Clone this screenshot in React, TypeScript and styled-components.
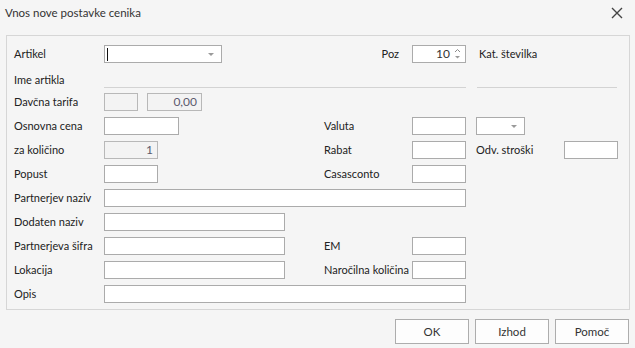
import React from "react";
import styled, { createGlobalStyle } from "styled-components";

const GlobalStyle = createGlobalStyle`
  html, body {
    margin: 0;
    padding: 0;
    background: #f5f5f5;
  }
  body {
    font-family: Lato, "Noto Sans", Arial, sans-serif;
    font-size: 11px;
    color: #222;
  }
`;

const Window = styled.div`
  width: 635px;
  height: 348px;
  background: #f5f5f5;
  display: flex;
  flex-direction: column;
  overflow: hidden;
`;

const TitleBar = styled.div`
  height: 35px;
  display: flex;
  align-items: flex-start;
  justify-content: space-between;
  padding: 4px 12px 0 5px;
  box-sizing: border-box;
`;

const Title = styled.div`
  font-size: 11.5px;
  line-height: 18px;
  color: #333;
`;

const CloseButton = styled.div`
  width: 12px;
  height: 12px;
  margin-top: 3px;
  display: flex;
`;

const Panel = styled.div`
  margin: 0 5px 0 6px;
  height: 275px;
  border: 1px solid #d6d6d6;
  box-sizing: border-box;
  overflow: hidden;
`;

const FormGrid = styled.div`
  display: grid;
  grid-template-columns: 90px 220px 88px 54px 10px 88px 54px;
  grid-auto-rows: 18px;
  row-gap: 6px;
  padding: 9px 0 0 7px;
`;

const Label = styled.div<{ $col?: string; $right?: boolean; $indent?: number; $drop?: number }>`
  grid-column: ${(p) => p.$col || "auto"};
  line-height: 18px;
  white-space: nowrap;
  text-align: ${(p) => (p.$right ? "right" : "left")};
  padding-right: ${(p) => (p.$right ? "13px" : "0")};
  padding-left: ${(p) => p.$indent || 0}px;
  margin-top: ${(p) => p.$drop || 0}px;
`;

const Field = styled.div<{ $col?: string; $w?: number; $disabled?: boolean }>`
  grid-column: ${(p) => p.$col || "auto"};
  width: ${(p) => (p.$w ? `${p.$w}px` : "auto")};
  height: 18px;
  box-sizing: border-box;
  border: 1px solid ${(p) => (p.$disabled ? "#b8b8b8" : "#ababab")};
  background: ${(p) => (p.$disabled ? "#f3f3f3" : "#ffffff")};
  display: flex;
  align-items: center;
  justify-content: flex-end;
  padding: 0 4px 0 2px;
  color: #5b5b6e;
  font-size: 12px;
  line-height: 16px;
  position: relative;
`;

const Pair = styled.div<{ $col?: string }>`
  grid-column: ${(p) => p.$col || "auto"};
  display: flex;
  gap: 9px;
`;

const Caret = styled.span`
  position: absolute;
  left: 2px;
  top: 2px;
  width: 1px;
  height: 13px;
  background: #111;
`;

const DropArrow = styled.span`
  position: absolute;
  right: 7px;
  top: 7px;
  width: 0;
  height: 0;
  border-left: 3px solid transparent;
  border-right: 3px solid transparent;
  border-top: 3px solid #9a9a9a;
`;

const SpinValue = styled.span`
  margin-right: 4px;
  color: #333;
`;

const Underline = styled.div<{ $col: string; $inset?: number }>`
  grid-column: ${(p) => p.$col};
  align-self: end;
  height: 0;
  border-bottom: 1px solid #d3d3d3;
  margin: 0 ${(p) => p.$inset || 0}px -1px ${(p) => p.$inset || 0}px;
`;

const Footer = styled.div`
  display: flex;
  justify-content: flex-end;
  gap: 6px;
  padding: 9px 6px 0 0;
`;

const Button = styled.div`
  width: 74px;
  height: 25px;
  box-sizing: border-box;
  border: 1px solid #adadad;
  background: #fdfdfd;
  display: flex;
  align-items: center;
  justify-content: center;
  color: #333;
  font-size: 11.5px;
`;

const SpinArrows = () => (
  <svg width="7" height="12" viewBox="0 0 7 12">
    <path d="M1 4 L3.5 1.5 L6 4" fill="none" stroke="#8a8a8a" strokeWidth="1" />
    <path d="M1 8 L6 8 L3.5 10.5 Z" fill="#9a9a9a" />
  </svg>
);

export default function App() {
  return (
    <Window>
      <GlobalStyle />
      <TitleBar>
        <Title>Vnos nove postavke cenika</Title>
        <CloseButton>
          <svg width="12" height="12" viewBox="0 0 12 12">
            <path d="M1 1 L11 11 M11 1 L1 11" stroke="#444" strokeWidth="1.4" />
          </svg>
        </CloseButton>
      </TitleBar>
      <Panel>
        <FormGrid>
          <Label $col="1">Artikel</Label>
          <Field $col="2" $w={118}>
            <Caret />
            <DropArrow />
          </Field>
          <Label $col="3" $right>
            Poz
          </Label>
          <Field $col="4">
            <SpinValue>10</SpinValue>
            <SpinArrows />
          </Field>
          <Label $col="6 / 8" $indent={3}>
            Kat. številka
          </Label>

          <Label $col="1" $drop={2}>
            Ime artikla
          </Label>
          <Underline $col="2 / 5" />
          <Underline $col="6 / 8" $inset={1} />

          <Label $col="1">Davčna tarifa</Label>
          <Pair $col="2">
            <Field $w={34} $disabled />
            <Field $w={55} $disabled>
              0,00
            </Field>
          </Pair>

          <Label $col="1">Osnovna cena</Label>
          <Field $col="2" $w={75} />
          <Label $col="3">Valuta</Label>
          <Field $col="4" />
          <Field $col="6" $w={49}>
            <DropArrow />
          </Field>

          <Label $col="1">za količino</Label>
          <Field $col="2" $w={54} $disabled>
            1
          </Field>
          <Label $col="3">Rabat</Label>
          <Field $col="4" />
          <Label $col="6">Odv. stroški</Label>
          <Field $col="7" />

          <Label $col="1">Popust</Label>
          <Field $col="2" $w={54} />
          <Label $col="3">Casasconto</Label>
          <Field $col="4" />

          <Label $col="1">Partnerjev naziv</Label>
          <Field $col="2 / 5" />

          <Label $col="1">Dodaten naziv</Label>
          <Field $col="2" $w={181} />

          <Label $col="1">Partnerjeva šifra</Label>
          <Field $col="2" $w={181} />
          <Label $col="3">EM</Label>
          <Field $col="4" />

          <Label $col="1">Lokacija</Label>
          <Field $col="2" $w={181} />
          <Label $col="3">Naročilna količina</Label>
          <Field $col="4" />

          <Label $col="1">Opis</Label>
          <Field $col="2 / 5" />
        </FormGrid>
      </Panel>
      <Footer>
        <Button>OK</Button>
        <Button>Izhod</Button>
        <Button>Pomoč</Button>
      </Footer>
    </Window>
  );
}
